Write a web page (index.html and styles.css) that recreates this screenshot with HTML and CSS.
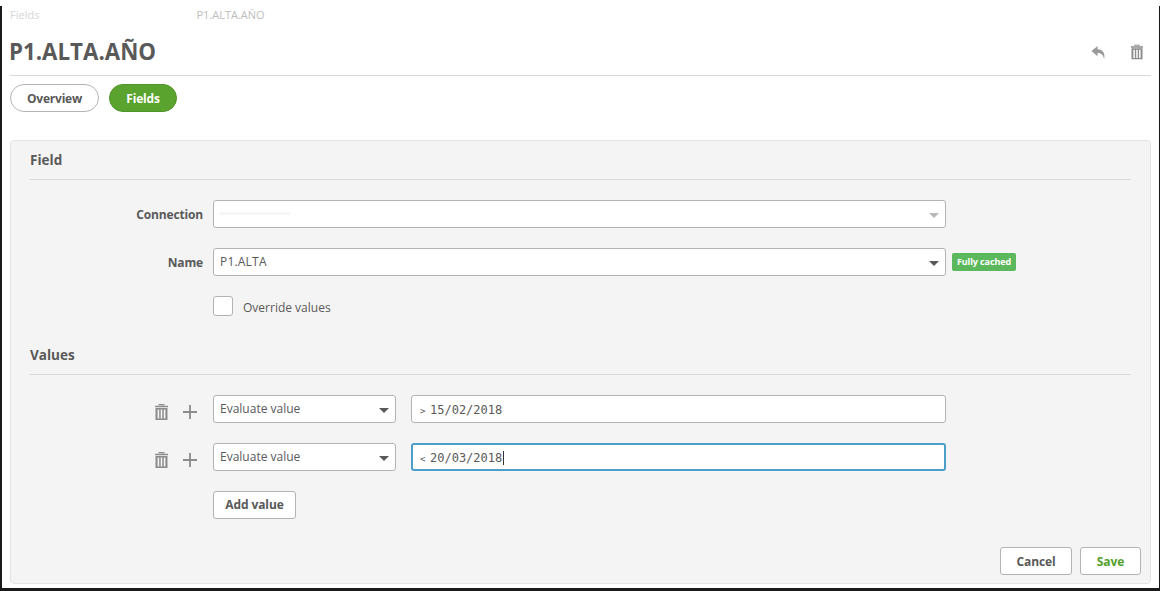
FILE: index.html
```html
<!DOCTYPE html>
<html>
<head lang="en">
    <meta charset="UTF-8">
    <title>P1.ALTA.AÑO</title>
    <link rel="stylesheet" href="styles.css">
</head>
<body>
<div class="page">
    <div class="crumb"><span>Fields</span><span class="crumb-gap">P1.ALTA.AÑO</span></div>
    <div class="head">
        <h1 class="title">P1.ALTA.AÑO</h1>
        <div class="head-icons">
            <svg class="icon" width="15" height="15" viewBox="0 0 16 16"><path d="M7 1 L0.5 6.5 L7 12 V8.5 C10.5 8.5 12.8 9.8 14 15 C15.6 9 12.5 4.6 7 4.5 Z" fill="#999"/></svg>
            <svg class="icon" width="12" height="16" viewBox="0 0 13 16"><use href="#trash"/></svg>
        </div>
    </div>
    <div class="tabs">
        <a class="tab">Overview</a>
        <a class="tab tab-on">Fields</a>
    </div>
    <div class="panel">
        <h2 class="section">Field</h2>
        <div class="form">
            <div class="row">
                <label class="label">Connection</label>
                <div class="select wide"><span class="smudge"></span><i class="arrow arrow-off"></i></div>
            </div>
            <div class="row">
                <label class="label">Name</label>
                <div class="select wide">P1.ALTA<i class="arrow"></i></div>
                <span class="badge">Fully cached</span>
            </div>
            <div class="row check-row">
                <span class="check"></span>
                <span class="check-text">Override values</span>
            </div>
        </div>
        <h2 class="section section-values">Values</h2>
        <div class="form form-values">
            <div class="row">
                <div class="tools">
                    <svg class="icon" width="13" height="16" viewBox="0 0 13 16"><use href="#trash"/></svg>
                    <svg class="icon" width="14" height="14" viewBox="0 0 14 14"><path d="M7 0 V14 M0 7 H14" stroke="#8c8c8c" stroke-width="1.8" fill="none"/></svg>
                </div>
                <div class="select narrow">Evaluate value<i class="arrow"></i></div>
                <div class="value"><span class="op">&gt;</span>15/02/2018</div>
            </div>
            <div class="row">
                <div class="tools">
                    <svg class="icon" width="13" height="16" viewBox="0 0 13 16"><use href="#trash"/></svg>
                    <svg class="icon" width="14" height="14" viewBox="0 0 14 14"><path d="M7 0 V14 M0 7 H14" stroke="#8c8c8c" stroke-width="1.8" fill="none"/></svg>
                </div>
                <div class="select narrow">Evaluate value<i class="arrow"></i></div>
                <div class="value value-focus"><span class="op">&lt;</span><span class="caret">20/03/2018</span></div>
            </div>
            <div class="row">
                <a class="btn add">Add value</a>
            </div>
        </div>
        <div class="foot">
            <a class="btn cancel">Cancel</a>
            <a class="btn save">Save</a>
        </div>
    </div>
</div>
<svg width="0" height="0" class="defs">
    <symbol id="trash" viewBox="0 0 13 16">
        <path d="M3.5 0.5 H9.5 M0 2.6 H13" stroke="#8c8c8c" stroke-width="1.5" fill="none"/>
        <path d="M0.5 4 H12.5 V16 H0.5 Z M2.6 5.5 V14.5 H4.2 V5.5 Z M5.7 5.5 V14.5 H7.3 V5.5 Z M8.8 5.5 V14.5 H10.4 V5.5 Z" fill="#8c8c8c" fill-rule="evenodd"/>
    </symbol>
</svg>
</body>
</html>
```

FILE: styles.css
```css
* {
    margin: 0;
    padding: 0;
    box-sizing: border-box;
}

html, body {
    width: 1160px;
    height: 591px;
    overflow: hidden;
    background: #fff;
}

body {
    font-family: "Open Sans", "Noto Sans", "Liberation Sans", sans-serif;
    font-size: 12px;
    color: #595959;
}

.defs {
    display: block;
    height: 0;
}

.page {
    height: 585px;
    margin-top: 6px;
    padding: 0 8px;
    border-left: 2px solid #1a1a1a;
    border-right: 1px solid #1a1a1a;
    border-bottom: 3px solid #1a1a1a;
    background: #fff;
}

.crumb {
    height: 14px;
    padding-top: 3px;
    font-size: 11px;
    line-height: 12px;
    color: #d6d6d6;
    white-space: nowrap;
}

.crumb-gap {
    margin-left: 157px;
    color: #bdbdbd;
}

.head {
    display: flex;
    justify-content: space-between;
    align-items: center;
    height: 56px;
    padding-top: 17px;
    padding-bottom: 8px;
    border-bottom: 1px solid #d9d9d9;
}

.title {
    margin-left: -1px;
    font-size: 22.3px;
    font-weight: 700;
    line-height: 30px;
    color: #595959;
}

.head-icons {
    display: flex;
    align-items: center;
    gap: 25px;
    padding-right: 8px;
}

.icon {
    display: block;
    flex: none;
}

.tabs {
    display: flex;
    gap: 10px;
    margin-top: 8px;
}

.tab {
    display: block;
    width: 89px;
    height: 28px;
    line-height: 27px;
    text-align: center;
    border: 1px solid #b3b3b3;
    border-radius: 14px;
    font-weight: 700;
    font-size: 12px;
    letter-spacing: -0.2px;
    color: #595959;
    background: #fff;
}

.tab-on {
    width: 68px;
    color: #fff;
    background: #5aa32e;
    border-color: #4f962a;
}

.panel {
    height: 444px;
    margin-top: 28px;
    padding: 0 19px;
    background: #f4f4f4;
    border: 1px solid #e3e3e3;
    border-radius: 4px;
}

.section {
    height: 39px;
    padding-top: 9px;
    font-size: 13.5px;
    line-height: 20px;
    font-weight: 700;
    color: #595959;
    border-bottom: 1px solid #d9d9d9;
}

.section-values {
    margin-top: 20px;
}

.form {
    display: flex;
    flex-direction: column;
    gap: 20px;
    margin-top: 20px;
    padding-left: 183px;
}

.row {
    display: flex;
    align-items: center;
    height: 28px;
}

.label {
    width: 100px;
    margin-left: -110px;
    margin-right: 10px;
    text-align: right;
    font-weight: 700;
    letter-spacing: -0.15px;
    color: #595959;
}

.select {
    position: relative;
    height: 28px;
    line-height: 25px;
    padding-left: 6px;
    background: #fff;
    border: 1px solid #b3b3b3;
    border-radius: 3px;
    color: #595959;
    flex: none;
}

.wide {
    width: 733px;
    letter-spacing: 0.2px;
}

.narrow {
    width: 183px;
}

.smudge {
    display: block;
    width: 70px;
    height: 3px;
    margin-top: 11px;
    background: #f6f6f6;
}

.arrow {
    position: absolute;
    right: 6px;
    top: 12px;
    width: 0;
    height: 0;
    border-left: 5px solid transparent;
    border-right: 5px solid transparent;
    border-top: 5px solid #595959;
}

.arrow-off {
    border-top-color: #b8b8b8;
}

.badge {
    width: 64px;
    height: 18px;
    margin-left: 6px;
    line-height: 18px;
    text-align: center;
    font-size: 9px;
    font-weight: 700;
    letter-spacing: -0.1px;
    white-space: nowrap;
    color: #fff;
    background: #5cb85c;
    border-radius: 2px;
    flex: none;
}

.check-row {
    height: 20px;
}

.check {
    width: 20px;
    height: 20px;
    background: #fff;
    border: 1px solid #b3b3b3;
    border-radius: 3px;
    flex: none;
}

.check-text {
    margin-left: 10px;
    padding-top: 2px;
}

.tools {
    display: flex;
    align-items: center;
    gap: 15px;
    width: 43px;
    margin-left: -58px;
    margin-right: 15px;
    padding-top: 6px;
}

.value {
    width: 535px;
    height: 28px;
    margin-left: 15px;
    padding-left: 8px;
    line-height: 28px;
    font-family: "DejaVu Sans Mono", "Liberation Mono", monospace;
    font-size: 12px;
    color: #595959;
    background: #fff;
    border: 1px solid #b3b3b3;
    border-radius: 3px;
    flex: none;
}

.op {
    display: inline-block;
    width: 10px;
    font-size: 9px;
}

.value-focus {
    border: 2px solid #4d9fc9;
    padding-left: 7px;
    line-height: 26px;
}

.caret {
    padding-right: 1px;
    border-right: 1px solid #333;
}

.btn {
    display: block;
    height: 28px;
    line-height: 26px;
    text-align: center;
    font-weight: 700;
    letter-spacing: -0.1px;
    background: #fff;
    border: 1px solid #b3b3b3;
    border-radius: 3px;
    color: #595959;
}

.add {
    width: 83px;
}

.foot {
    display: flex;
    justify-content: flex-end;
    gap: 8px;
    margin-top: 28px;
    margin-right: -10px;
}

.cancel {
    width: 72px;
    line-height: 27px;
}

.save {
    width: 61px;
    line-height: 27px;
    color: #52a02c;
}
```
